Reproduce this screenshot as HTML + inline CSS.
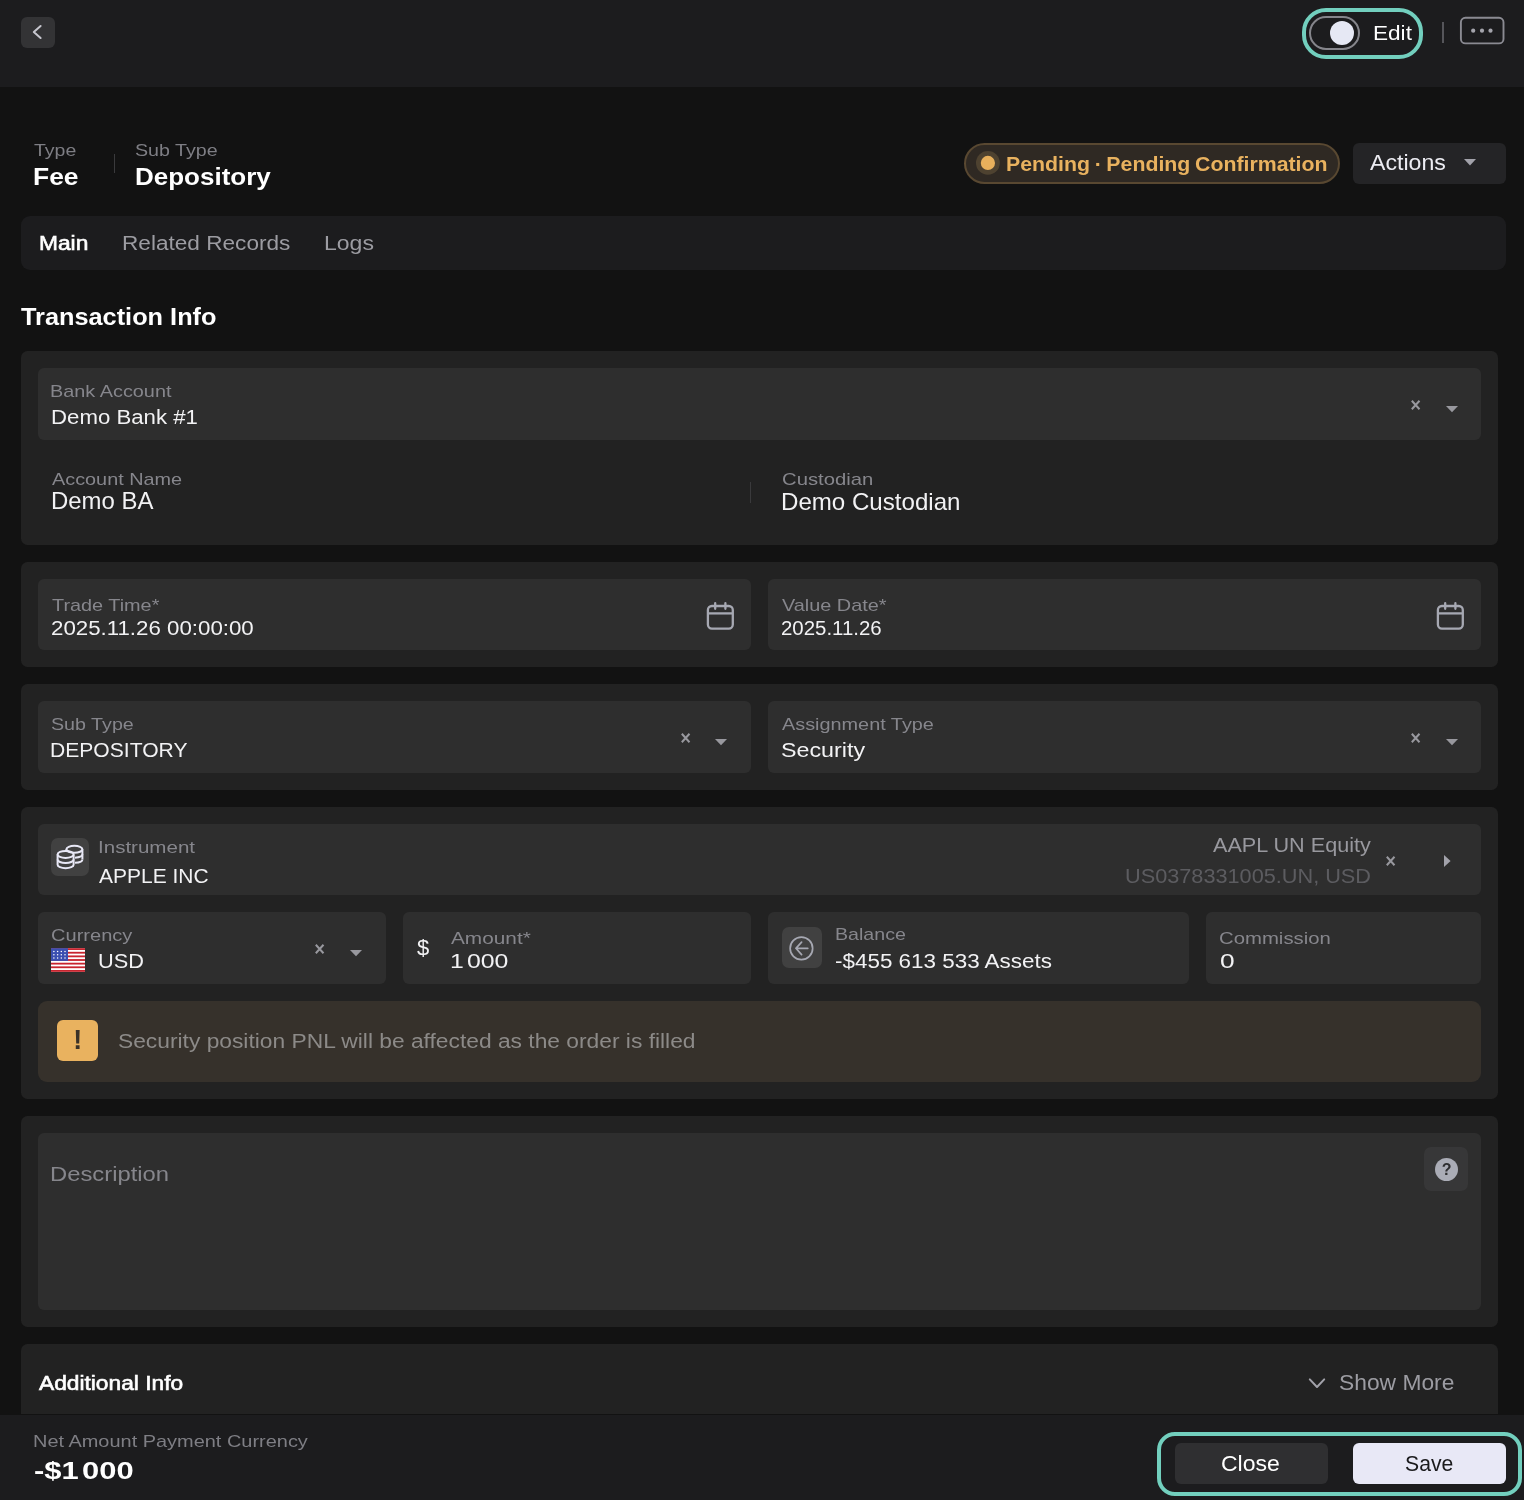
<!DOCTYPE html>
<html lang="en">
<head>
<meta charset="utf-8">
<title>Fee transaction</title>
<style>
html,body{margin:0;padding:0}
body{width:1524px;height:1500px;overflow:hidden;position:relative;background:#121212;font-family:"Liberation Sans",sans-serif;-webkit-font-smoothing:antialiased}
.a{position:absolute;box-sizing:border-box}
.t{position:absolute;white-space:pre;line-height:1;display:block;transform-origin:0 0}
.tl{position:absolute;left:0;top:0;width:1524px;height:1500px;will-change:transform}
.card{background:#222222;border-radius:6.5px}
.f{background:#2e2e2e;border-radius:6px}
svg{position:absolute;overflow:visible}

</style>
</head>
<body>
<!-- top bar -->
<div class="a" style="left:0;top:0;width:1524px;height:87px;background:#1c1c1e"></div>
<div class="a" style="left:21px;top:17px;width:34px;height:31px;background:#333335;border-radius:6px"></div>
<svg style="left:21px;top:17px" width="34" height="31" viewBox="0 0 34 31"><path d="M19.6 9 L12.8 15 L19.6 21" fill="none" stroke="#c6c6ce" stroke-width="2" stroke-linecap="round" stroke-linejoin="round"/></svg>
<div class="a" style="left:1302px;top:8px;width:121px;height:51px;border:4px solid #72cfbe;border-radius:24px"></div>
<svg style="left:1309px;top:16px" width="51" height="34" viewBox="0 0 51 34"><rect x="1" y="1" width="49" height="32" rx="16" fill="none" stroke="#85858b" stroke-width="2"/></svg>
<div class="a" style="left:1330px;top:20.8px;width:24.4px;height:24.4px;border-radius:13px;background:#e6e8f4"></div>
<div class="a" style="left:1442px;top:22px;width:1.5px;height:21px;background:#55555a"></div>
<svg style="left:1459.5px;top:17px" width="45" height="27" viewBox="0 0 45 27"><rect x="0.9" y="0.8" width="42.6" height="25.6" rx="4.5" fill="none" stroke="#8a8a92" stroke-width="1.9"/></svg>
<svg style="left:1459px;top:17px" width="45" height="27" viewBox="0 0 45 27"><g fill="#a4a4ac"><circle cx="14.2" cy="13.7" r="2.1"/><circle cx="23" cy="13.7" r="2.1"/><circle cx="31.5" cy="13.7" r="2.1"/></g></svg>

<!-- title row -->
<div class="a" style="left:113.5px;top:153.5px;width:1px;height:19px;background:#3a3a3c"></div>
<svg style="left:964px;top:143px" width="376" height="41" viewBox="0 0 376 41"><rect x="1" y="1" width="374" height="39" rx="19.5" fill="#2f2923" stroke="#594831" stroke-width="2"/></svg>
<svg style="left:975px;top:150px" width="26" height="26" viewBox="0 0 26 26"><circle cx="12.9" cy="12.9" r="11.9" fill="#4e4230"/><circle cx="12.9" cy="12.9" r="7.1" fill="#e8b05c"/></svg>
<div class="a" style="left:1353px;top:143px;width:153px;height:40.5px;border-radius:6px;background:#242426"></div>
<svg style="left:1464px;top:159px" width="12" height="7" viewBox="0 0 12 7"><path d="M0 0H12L6 6.4Z" fill="#a2a2aa"/></svg>

<!-- tabs -->
<div class="a" style="left:21px;top:215.5px;width:1485px;height:54px;border-radius:9px;background:#1c1c1e"></div>

<!-- card 1 : bank account -->
<div class="a card" style="left:21px;top:351px;width:1477px;height:194px"></div>
<div class="a f" style="left:38px;top:368px;width:1443px;height:72px"></div>
<svg style="left:1410.5px;top:400px" width="10" height="10" viewBox="0 0 10 10"><path d="M0.8 0.8L8.5 9.2M8.5 0.8L0.8 9.2" stroke="#98989e" stroke-width="2" fill="none"/></svg>
<svg style="left:1446px;top:406px" width="12" height="7" viewBox="0 0 12 7"><path d="M0 0H12L6 6.3Z" fill="#98989e"/></svg>
<div class="a" style="left:749.5px;top:482px;width:1px;height:20.5px;background:#3a3a3c"></div>

<!-- card 2 : dates -->
<div class="a card" style="left:21px;top:562px;width:1477px;height:105px"></div>
<div class="a f" style="left:38px;top:579.3px;width:713px;height:70.5px"></div>
<div class="a f" style="left:768px;top:579.3px;width:713px;height:70.5px"></div>
<svg style="left:706px;top:601px" width="30" height="30" viewBox="0 0 30 30"><g fill="none" stroke="#a6a8b2" stroke-width="2.3" stroke-linecap="round"><rect x="1.9" y="5" width="24.9" height="22.6" rx="4"/><path d="M1.9 12.4H26.8" stroke-linecap="butt"/><path d="M9.2 2.2V7.8M19.4 2.2V7.8"/></g></svg>
<svg style="left:1436px;top:601px" width="30" height="30" viewBox="0 0 30 30"><g fill="none" stroke="#a6a8b2" stroke-width="2.3" stroke-linecap="round"><rect x="1.9" y="5" width="24.9" height="22.6" rx="4"/><path d="M1.9 12.4H26.8" stroke-linecap="butt"/><path d="M9.2 2.2V7.8M19.4 2.2V7.8"/></g></svg>

<!-- card 3 : sub type / assignment -->
<div class="a card" style="left:21px;top:684px;width:1477px;height:105.5px"></div>
<div class="a f" style="left:38px;top:701px;width:713px;height:71.5px"></div>
<div class="a f" style="left:768px;top:701px;width:713px;height:71.5px"></div>
<svg style="left:680.5px;top:733.1px" width="10" height="10" viewBox="0 0 10 10"><path d="M0.8 0.8L8.5 9.2M8.5 0.8L0.8 9.2" stroke="#98989e" stroke-width="2" fill="none"/></svg>
<svg style="left:714.5px;top:739.3px" width="12" height="7" viewBox="0 0 12 7"><path d="M0 0H12L6 6.3Z" fill="#98989e"/></svg>
<svg style="left:1410.5px;top:733.1px" width="10" height="10" viewBox="0 0 10 10"><path d="M0.8 0.8L8.5 9.2M8.5 0.8L0.8 9.2" stroke="#98989e" stroke-width="2" fill="none"/></svg>
<svg style="left:1446px;top:739.3px" width="12" height="7" viewBox="0 0 12 7"><path d="M0 0H12L6 6.3Z" fill="#98989e"/></svg>

<!-- card 4 : instrument / money -->
<div class="a card" style="left:21px;top:807px;width:1477px;height:291.5px"></div>
<div class="a f" style="left:38px;top:824px;width:1443px;height:71px"></div>
<div class="a" style="left:51px;top:838px;width:38px;height:38.4px;border-radius:7px;background:#414141"></div>
<svg style="left:51px;top:838px" width="38" height="38" viewBox="0 0 38 38"><g fill="none" stroke="#e8e8f6" stroke-width="2">
<ellipse cx="23.4" cy="11.3" rx="8" ry="3.5"/>
<path d="M31.4 11.3V21.4"/><path d="M15.4 11.3V13"/>
<path d="M31.4 16.3C31.4 18 28.6 19.4 24 19.7"/>
<path d="M31.4 21.4C31.4 23.1 28.6 24.5 24 24.8"/>
<ellipse cx="14.6" cy="16.4" rx="8" ry="3.5"/>
<path d="M6.6 16.4V26.7C6.6 28.6 10.2 30.2 14.6 30.2S22.6 28.6 22.6 26.7V16.4"/>
<path d="M6.6 21.5C6.6 23.4 10.2 25 14.6 25S22.6 23.4 22.6 21.5"/>
</g></svg>
<svg style="left:1385.7px;top:856.3px" width="10" height="10" viewBox="0 0 10 10"><path d="M0.8 0.8L8.5 9.2M8.5 0.8L0.8 9.2" stroke="#98989e" stroke-width="2" fill="none"/></svg>
<svg style="left:1444px;top:854.5px" width="7" height="12" viewBox="0 0 7 12"><path d="M0 0V12L6.6 6Z" fill="#a2a2aa"/></svg>

<div class="a f" style="left:38px;top:912px;width:348px;height:72px"></div>
<div class="a f" style="left:403px;top:912px;width:348px;height:72px"></div>
<div class="a f" style="left:768px;top:912px;width:420.7px;height:72px"></div>
<div class="a f" style="left:1206px;top:912px;width:275px;height:72px"></div>
<!-- flag -->
<svg style="left:51px;top:948px" width="34" height="24" viewBox="0 0 34 23.66"><rect width="34" height="23.66" fill="#fff"/><g fill="#c8242e"><rect y="0" width="34" height="1.82"/><rect y="3.64" width="34" height="1.82"/><rect y="7.28" width="34" height="1.82"/><rect y="10.92" width="34" height="1.82"/><rect y="14.56" width="34" height="1.82"/><rect y="18.2" width="34" height="1.82"/><rect y="21.84" width="34" height="1.82"/></g><rect width="17" height="12.74" fill="#3b4fb0"/><g fill="#fff"><circle cx="2.9" cy="3.3" r="0.75"/><circle cx="6.6" cy="3.3" r="0.75"/><circle cx="10.3" cy="3.3" r="0.75"/><circle cx="14" cy="3.3" r="0.75"/><circle cx="2.9" cy="6.6" r="0.75"/><circle cx="6.6" cy="6.6" r="0.75"/><circle cx="10.3" cy="6.6" r="0.75"/><circle cx="14" cy="6.6" r="0.75"/><circle cx="2.9" cy="9.9" r="0.75"/><circle cx="6.6" cy="9.9" r="0.75"/><circle cx="10.3" cy="9.9" r="0.75"/><circle cx="14" cy="9.9" r="0.75"/></g></svg>
<svg style="left:315.3px;top:944.1px" width="10" height="10" viewBox="0 0 10 10"><path d="M0.8 0.8L8.5 9.2M8.5 0.8L0.8 9.2" stroke="#98989e" stroke-width="2" fill="none"/></svg>
<svg style="left:350px;top:950px" width="12" height="7" viewBox="0 0 12 7"><path d="M0 0H12L6 6.3Z" fill="#98989e"/></svg>
<!-- balance icon -->
<div class="a" style="left:782px;top:927px;width:40px;height:41px;border-radius:7px;background:#414141"></div>
<svg style="left:782px;top:927px" width="40" height="41" viewBox="0 0 40 41"><g fill="none" stroke="#a6a8b2" stroke-width="1.7" stroke-linecap="round" stroke-linejoin="round"><circle cx="19.4" cy="21.4" r="11.25"/><path d="M25.8 21.3H14.2M19.6 15.2L13.9 21.3L19.6 27.6"/></g></svg>
<!-- warning banner -->
<div class="a" style="left:38px;top:1001px;width:1443px;height:81px;border-radius:9px;background:#36312b"></div>
<div class="a" style="left:57px;top:1020px;width:41px;height:41px;border-radius:6px;background:#e9b25f"></div>

<!-- card 5 : description -->
<div class="a card" style="left:21px;top:1116px;width:1477px;height:211px"></div>
<div class="a f" style="left:38px;top:1133px;width:1443px;height:176.7px"></div>
<div class="a" style="left:1424px;top:1147px;width:44px;height:43.5px;border-radius:7px;background:#373738"></div>
<div class="a" style="left:1435.1px;top:1158px;width:23px;height:23px;border-radius:12px;background:#aaacb6"></div>

<!-- card 6 : additional info -->
<div class="a card" style="left:21px;top:1343.6px;width:1477px;height:70.2px;border-radius:6.5px 6.5px 0 0"></div>
<svg style="left:1308px;top:1377px" width="18" height="13" viewBox="0 0 18 13"><path d="M1.8 2.4L9 10L16.2 2.4" fill="none" stroke="#a2a2aa" stroke-width="2" stroke-linecap="round" stroke-linejoin="round"/></svg>

<!-- footer -->
<div class="a" style="left:0;top:1415px;width:1524px;height:85px;background:#1c1c1e"></div>
<div class="a" style="left:1157px;top:1431.5px;width:365px;height:64.5px;border:4px solid #72cfbe;border-radius:18px"></div>
<div class="a" style="left:1175px;top:1443px;width:153px;height:41px;border-radius:6px;background:#2f2f31"></div>
<div class="a" style="left:1353px;top:1443px;width:153px;height:41px;border-radius:6px;background:#e8e8f6"></div>

<!-- text layer -->
<div class="tl">
<span class="t" style="left:1372.69px;top:23px;font-size:20px;color:#ffffff;transform:scaleX(1.1287)">Edit</span>
<span class="t" style="left:33.99px;top:142px;font-size:17px;color:#7e7e84;transform:scaleX(1.1476)">Type</span>
<span class="t" style="left:33.47px;top:165px;font-size:24px;color:#ffffff;font-weight:700;transform:scaleX(1.1007)">Fee</span>
<span class="t" style="left:134.58px;top:142px;font-size:17px;color:#7e7e84;transform:scaleX(1.1560)">Sub Type</span>
<span class="t" style="left:134.50px;top:165px;font-size:24px;color:#ffffff;font-weight:700;transform:scaleX(1.0827)">Depository</span>
<span class="t" style="left:1006.08px;top:154px;font-size:20px;color:#e9b25f;font-weight:700;word-spacing:-1.2px;transform:scaleX(1.0648)">Pending · Pending Confirmation</span>
<span class="t" style="left:1369.73px;top:153px;font-size:21.5px;color:#ececf2;transform:scaleX(1.0759)">Actions</span>
<span class="t" style="left:39.14px;top:233px;font-size:20px;color:#ffffff;-webkit-text-stroke:0.6px #ffffff;transform:scaleX(1.1375)">Main</span>
<span class="t" style="left:121.89px;top:233px;font-size:20px;color:#9c9ca2;transform:scaleX(1.1302)">Related Records</span>
<span class="t" style="left:323.65px;top:233px;font-size:20px;color:#9c9ca2;transform:scaleX(1.1503)">Logs</span>
<span class="t" style="left:20.71px;top:305px;font-size:24px;color:#ffffff;font-weight:700;transform:scaleX(1.0546)">Transaction Info</span>
<span class="t" style="left:50.49px;top:383px;font-size:17px;color:#86868c;transform:scaleX(1.1684)">Bank Account</span>
<span class="t" style="left:50.82px;top:407px;font-size:20px;color:#f2f2f4;transform:scaleX(1.1106)">Demo Bank #1</span>
<span class="t" style="left:51.70px;top:471px;font-size:17px;color:#86868c;transform:scaleX(1.1672)">Account Name</span>
<span class="t" style="left:51.27px;top:489px;font-size:24px;color:#f2f2f4;transform:scaleX(0.9968)">Demo BA</span>
<span class="t" style="left:781.57px;top:471px;font-size:17px;color:#86868c;transform:scaleX(1.1924)">Custodian</span>
<span class="t" style="left:781.26px;top:490px;font-size:24px;color:#f2f2f4;transform:scaleX(1.0039)">Demo Custodian</span>
<span class="t" style="left:51.58px;top:597px;font-size:17px;color:#86868c;transform:scaleX(1.1677)">Trade Time*</span>
<span class="t" style="left:50.78px;top:618px;font-size:20px;color:#f2f2f4;transform:scaleX(1.1138)">2025.11.26 00:00:00</span>
<span class="t" style="left:782.16px;top:597px;font-size:17px;color:#86868c;transform:scaleX(1.1689)">Value Date*</span>
<span class="t" style="left:781.38px;top:618px;font-size:20px;color:#f2f2f4;transform:scaleX(1.0206)">2025.11.26</span>
<span class="t" style="left:51.08px;top:716px;font-size:17px;color:#86868c;transform:scaleX(1.1574)">Sub Type</span>
<span class="t" style="left:50.31px;top:740px;font-size:20px;color:#f2f2f4;transform:scaleX(1.0539)">DEPOSITORY</span>
<span class="t" style="left:782.20px;top:716px;font-size:17px;color:#86868c;transform:scaleX(1.1676)">Assignment Type</span>
<span class="t" style="left:780.96px;top:740px;font-size:20px;color:#f2f2f4;transform:scaleX(1.1633)">Security</span>
<span class="t" style="left:97.95px;top:839px;font-size:17px;color:#86868c;transform:scaleX(1.2082)">Instrument</span>
<span class="t" style="left:98.73px;top:866px;font-size:20px;color:#f2f2f4;transform:scaleX(1.0487)">APPLE INC</span>
<span class="t" style="left:1212.62px;top:835px;font-size:20px;color:#98989e;transform:scaleX(1.0812)">AAPL UN Equity</span>
<span class="t" style="left:1125.37px;top:866px;font-size:20px;color:#5c5c60;transform:scaleX(1.0847)">US0378331005.UN, USD</span>
<span class="t" style="left:51.08px;top:927px;font-size:17px;color:#86868c;transform:scaleX(1.1799)">Currency</span>
<span class="t" style="left:98.07px;top:951px;font-size:20px;color:#f2f2f4;transform:scaleX(1.0883)">USD</span>
<span class="t" style="left:417.07px;top:937px;font-size:22px;color:#f2f2f4">$</span>
<span class="t" style="left:451.19px;top:930px;font-size:17px;color:#86868c;transform:scaleX(1.2236)">Amount*</span>
<span class="t" style="left:449.64px;top:951px;font-size:20px;color:#f2f2f4;word-spacing:-3px;transform:scaleX(1.2409)">1 000</span>
<span class="t" style="left:834.91px;top:926px;font-size:17px;color:#86868c;transform:scaleX(1.1532)">Balance</span>
<span class="t" style="left:835.13px;top:951px;font-size:20px;color:#f2f2f4;transform:scaleX(1.1211)">-$455 613 533 Assets</span>
<span class="t" style="left:1219.07px;top:930px;font-size:17px;color:#86868c;transform:scaleX(1.1960)">Commission</span>
<span class="t" style="left:1219.65px;top:951px;font-size:20px;color:#f2f2f4;transform:scaleX(1.3130)">0</span>
<span class="t" style="left:118.19px;top:1031px;font-size:20px;color:#8c8a88;transform:scaleX(1.1392)">Security position PNL will be affected as the order is filled</span>
<span class="t" style="left:73.37px;top:1027px;font-size:26.8px;color:#3a3228;font-weight:700">!</span>
<span class="t" style="left:1441.87px;top:1162px;font-size:16px;color:#2e2e30;font-weight:700">?</span>
<span class="t" style="left:50.09px;top:1164px;font-size:20px;color:#86868c;transform:scaleX(1.1904)">Description</span>
<span class="t" style="left:38.67px;top:1373px;font-size:20px;color:#ffffff;-webkit-text-stroke:0.6px #ffffff;transform:scaleX(1.1368)">Additional Info</span>
<span class="t" style="left:1338.62px;top:1373px;font-size:21.5px;color:#9c9ca2;transform:scaleX(1.0610)">Show More</span>
<span class="t" style="left:33.18px;top:1433px;font-size:17px;color:#7e7e84;transform:scaleX(1.1728)">Net Amount Payment Currency</span>
<span class="t" style="left:33.75px;top:1459px;font-size:24px;color:#ffffff;font-weight:700;word-spacing:-4px;transform:scaleX(1.2881)">-$1 000</span>
<span class="t" style="left:1221.36px;top:1454px;font-size:21.5px;color:#ffffff;transform:scaleX(1.0707)">Close</span>
<span class="t" style="left:1405.31px;top:1454px;font-size:21.5px;color:#1a1a1c;transform:scaleX(0.9851)">Save</span>
</div>
</body>
</html>
